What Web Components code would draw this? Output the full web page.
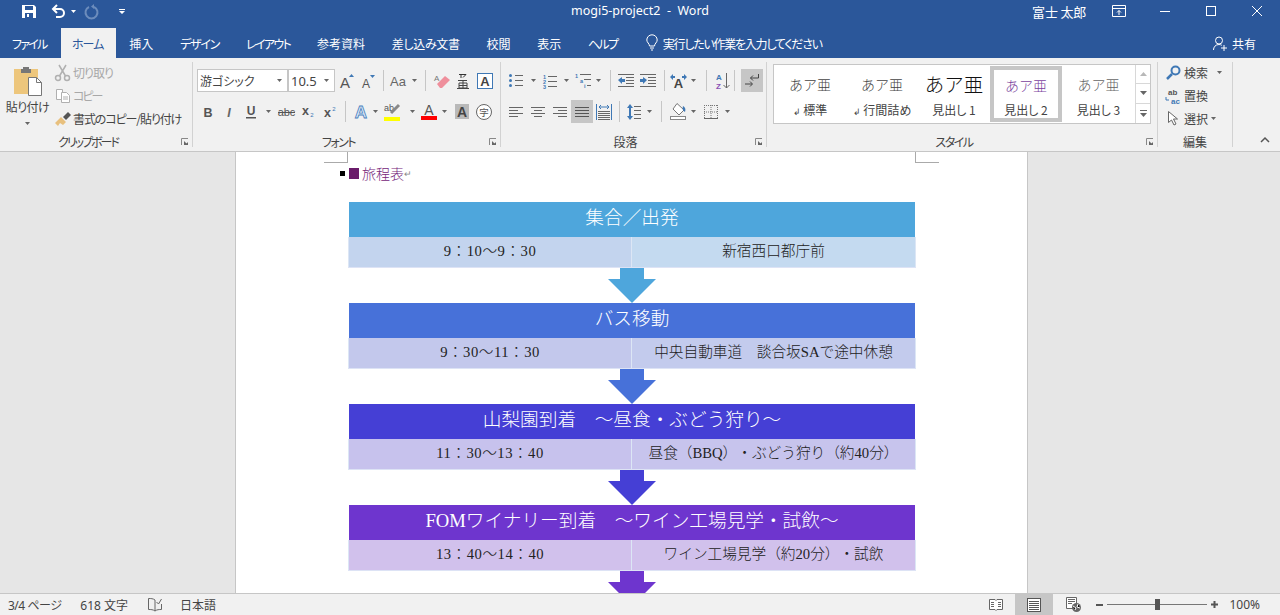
<!DOCTYPE html>
<html lang="ja">
<head>
<meta charset="utf-8">
<title>mogi5-project2 - Word</title>
<style>
    html, body { margin: 0; height: 100%; overflow: hidden; background: #e6e6e6; }
    body {
        display: flex;
        flex-direction: column;
        height: 615px;
        font-family: "Noto Sans CJK JP", "Noto Sans", sans-serif;
    }
</style>
</head>
<body>
<word-titlebar></word-titlebar>
<word-tabs></word-tabs>
<word-ribbon></word-ribbon>
<word-doc>
    <flow-step style="--h:#4ea6dc;--l:#c3d4ee;--r:#c4daf0" heading="集合／出発" left="9：10～9：30" right="新宿西口都庁前"></flow-step>
    <flow-arrow style="--h:#4ea6dc"></flow-arrow>
    <flow-step style="--h:#4771d9;--l:#c3c8ec;--r:#c3cbed" heading="バス移動" left="9：30～11：30" right="中央自動車道　談合坂SAで途中休憩"></flow-step>
    <flow-arrow style="--h:#4771d9"></flow-arrow>
    <flow-step style="--h:#453fd5;--l:#c7c2ed;--r:#c7c4ed" heading="山梨園到着　～昼食・ぶどう狩り～" left="11：30～13：40" right="昼食（BBQ）・ぶどう狩り（約40分）"></flow-step>
    <flow-arrow style="--h:#453fd5"></flow-arrow>
    <flow-step style="--h:#6e35ce;--l:#d1c1ec;--r:#d1c1ec" heading="FOMワイナリー到着　～ワイン工場見学・試飲～" left="13：40～14：40" right="ワイン工場見学（約20分）・試飲"></flow-step>
    <flow-arrow style="--h:#6e35ce"></flow-arrow>
</word-doc>
<word-status></word-status>

<script>
const G = "#666";
const B = "#3f78b5";
const SANS = 'font-family="Liberation Sans"';

const lines = (rows, col = G) => `<path fill="none" stroke="${col}" d="${rows.map(r => `M${r[0]} ${r[2] + .5}H${r[1]}`).join("")}"/>`;
const letter = (t, x, y, size, extra = "") => `<text x="${x}" y="${y}" ${SANS} font-size="${size}" text-anchor="middle" ${extra}>${t}</text>`;

const ICONS = {
    caret: [5, 3, `<path fill="#666" d="M0 0h5L2.5 3z"/>`],
    gup: [7, 4, `<path fill="#b8b8b8" d="M0 4h7L3.500 0z"/>`],
    gdown: [7, 4, `<path fill="#666" d="M0 0h7L3.500 4z"/>`],
    gmore: [7, 7, `<path fill="#666" d="M0 0h7v1H0zM0 3h7L3.500 7z"/>`],
    sep: [1, 21, `<rect width="1" height="21" fill="#c6c6c6"/>`],
    launcher: [8, 8, `<path fill="none" stroke="#888" d="M.5 7V.5H7"/><path fill="#666" d="M3 3l4 4H3z M7 4v3H4z"/>`],

    save: [14, 13, `<path fill="#fff" fill-rule="evenodd" d="M0 0h12l2 2v11H0zM3 1v4h8V1zM3 8v5h8V8z"/><rect x="5" y="9" width="2" height="3" fill="#fff"/>`],
    undo: [15, 14, `<path fill="none" stroke="#fff" stroke-width="2" d="M6 1 2 5l4 4"/><path fill="none" stroke="#fff" stroke-width="2" d="M2 5h7a4 4 0 0 1 0 8H5"/>`],
    redo: [14, 14, `<path fill="none" stroke="#6c8cbc" stroke-width="2" d="M5 3a6 6 0 1 0 5 0"/><path fill="#6c8cbc" d="M10 0v5l-3-2.500z"/>`],
    custom: [6, 5, `<path fill="#fff" d="M0 0h6v1H0zM0 2h6L3 5z"/>`],
    ribbonopt: [14, 12, `<path fill="none" stroke="#fff" d="M.5 .5h13v11H.5zM.5 3.500h13"/><path fill="none" stroke="#fff" d="M7 10V5.500M5 7.500l2-2 2 2"/>`],
    min: [10, 1, `<rect width="10" height="1" fill="#fff"/>`],
    max: [10, 10, `<rect x=".5" y=".5" width="9" height="9" fill="none" stroke="#fff"/>`],
    close: [10, 10, `<path stroke="#fff" d="M0 0l10 10M10 0 0 10"/>`],
    bulb: [12, 16, `<path fill="none" stroke="#fff" d="M3.500 11C3.500 8.500 .8 7.500 .8 5a5.200 5.200 0 0 1 10.400 0C11.200 7.500 8.500 8.500 8.500 11zM4 13h4M5 15h2"/>`],
    share: [15, 15, `<path fill="none" stroke="#fff" d="M6 1a3.500 3.500 0 0 1 0 7 3.500 3.500 0 0 1 0-7zM.5 14c0-3 2-5.500 5.500-5.500 1 0 2 .3 2.800 .8M11 9v6M8 12h6"/>`],

    paste: [29, 30, `<path fill="#edc67c" d="M0 3h24v25H0z"/><path fill="#777" d="M7 3h2V1h6v2h2v4H7z"/><path fill="#fff" stroke="#777" d="M14.500 11.500h8l5 5v13h-13z"/><path fill="none" stroke="#777" d="M22.500 11.500v5h5"/>`],
    cut: [15, 16, `<g fill="none" stroke="#b0b0b0" stroke-width="1.500"><circle cx="3" cy="13" r="2.500"/><circle cx="12" cy="13" r="2.500"/><path d="M4.500 11 11 0M10.500 11 4 0"/></g>`],
    copy: [14, 14, `<g fill="#fff" stroke="#b0b0b0"><path d="M.5 .5h6v10h-6z"/><path d="M5.500 3.500h5l3 3v7h-8z"/></g><path stroke="#b0b0b0" d="M7 8h5M7 10h5"/>`],
    brush: [16, 14, `<path fill="#e8c07e" d="M0 11l6-6 5 5-3 3-3-2-2 3z"/><path fill="#555" d="M8 5l5-5 3 3-5 5z"/>`],

    growfont: [16, 16, letter("A", 6, 15, 15, 'fill="#555"') + `<path fill="${B}" d="M10 4l2.500-3L15 4z"/>`],
    shrinkfont: [14, 14, letter("A", 5, 14, 12, 'fill="#555"') + `<path fill="${B}" d="M9 1h5l-2.500 3z"/>`],
    aa: [18, 14, `<text x="0" y="12" ${SANS} font-size="13" fill="#666">Aa</text>`],
    eraser: [16, 15, `<text x="0" y="8" ${SANS} font-size="8" fill="#777">A</text><path fill="#ef8f9c" d="M3 11l8-8 5 4-8 8H6z"/>`],
    ruby: [12, 16, `<path stroke="#333" fill="none" d="M2 1.500h7L6 4.500M4 2v3"/><path stroke="#444" fill="none" d="M1 7.500h9M2 10h8v5H2zM6 8v7M2 12.500h8M0 15.500h12"/>`],
    boxa: [16, 16, `<rect x=".5" y=".5" width="15" height="15" fill="#fff" stroke="${B}"/>` + letter("A", 8, 13, 13, 'fill="#444" font-weight="bold"')],
    bold: [10, 12, letter("B", 5, 11, 12.500, 'font-weight="bold" fill="#555"')],
    italic: [8, 12, letter("I", 4, 11, 12.500, 'font-style="italic" font-weight="bold" fill="#666"')],
    under: [10, 14, letter("U", 5, 10, 12, 'font-weight="bold" fill="#555"') + `<rect y="12" width="10" height="1.500" fill="#555"/>`],
    strike: [17, 12, letter("abc", 8.500, 10, 11, 'fill="#555"') + `<rect y="6" width="17" height="1" fill="#555"/>`],
    sub: [13, 13, letter("x", 4.500, 10, 12.500, 'font-weight="bold" fill="#555"') + letter("2", 11, 12, 6, `fill="${B}"`)],
    sup: [13, 13, letter("x", 4.500, 12, 12.500, 'font-weight="bold" fill="#555"') + letter("2", 11, 6, 6, `fill="${B}"`)],
    effect: [14, 15, `<text x="7" y="14" ${SANS} font-size="17" font-weight="bold" text-anchor="middle" fill="#dceaf8" stroke="#4a80bd" stroke-width=".8">A</text>`],
    hilite: [17, 19, `<text x="0" y="9" ${SANS} font-size="9" fill="#555">ab</text><path stroke="#888" stroke-width="3" d="M7 11l8-8"/><rect y="15" width="16" height="4" fill="#ff0"/>`],
    fontcolor: [16, 17, letter("A", 8, 12, 14, 'fill="#555"') + `<rect y="13" width="16" height="4" fill="#f00"/>`],
    shade: [14, 15, `<rect width="14" height="15" fill="#b9b9b9"/>` + letter("A", 7, 13, 14, 'fill="#444" font-weight="bold"')],
    ji: [16, 16, `<circle cx="8" cy="8" r="7.500" fill="#fff" stroke="#666"/><text x="8" y="11.500" font-family="Noto Sans CJK JP" font-size="9.500" text-anchor="middle" fill="#555">字</text>`],

    bullets: [14, 13, `<g fill="${B}"><circle cx="1.500" cy="1.500" r="1.500"/><circle cx="1.500" cy="6.500" r="1.500"/><circle cx="1.500" cy="11.500" r="1.500"/></g>` + lines([[6, 14, 1], [6, 14, 6], [6, 14, 11]])],
    numbers: [14, 14, `<g ${SANS} font-size="5.500" font-weight="bold" fill="${B}"><text x="0" y="5">1</text><text x="0" y="10">2</text><text x="0" y="15">3</text></g>` + lines([[5, 14, 2], [5, 14, 7], [5, 14, 12]])],
    multi: [16, 15, `<g ${SANS} font-size="5.500" font-weight="bold" fill="${B}"><text x="0" y="5">1</text><text x="5" y="10">a</text><text x="9" y="15">i</text></g>` + lines([[5, 16, 1], [9, 16, 6], [12, 16, 12]])],
    outdent: [16, 13, lines([[0, 16, 0], [8, 16, 3], [8, 16, 6], [8, 16, 9], [0, 16, 12]]) + `<path fill="${B}" d="M0 6l4-3v2h3v3H4v2z"/>`],
    indent: [16, 13, lines([[0, 16, 0], [8, 16, 3], [8, 16, 6], [8, 16, 9], [0, 16, 12]]) + `<path fill="${B}" d="M7 6 3 3v2H0v3h3v2z"/>`],
    direction: [17, 14, letter("A", 8.500, 14, 13, 'fill="#444" font-weight="bold"') + `<path fill="${B}" d="M0 3l3-3v2h2v2H3v2zM17 3l-3-3v2h-2v2h2v2z"/>`],
    sort: [13, 16, `<g ${SANS} font-size="8" font-weight="bold"><text x="0" y="7" fill="${B}">A</text><text x="0" y="16" fill="#8a4fb5">Z</text></g><path fill="none" stroke="#666" d="M10.500 0v15M7.500 12l3 3 3-3"/>`],
    pilcrow: [14, 14, `<path fill="none" stroke="#444" d="M13.500 0v4h-8M8 1.500 5.500 4 8 6.500M0 10h7M5 7.500 7.500 10 5 12.500"/>`],
    alignl: [14, 10, lines([[0, 14, 0], [0, 9, 3], [0, 14, 6], [0, 9, 9]])],
    alignc: [14, 10, lines([[0, 14, 0], [3, 11, 3], [0, 14, 6], [3, 11, 9]])],
    alignr: [14, 10, lines([[0, 14, 0], [5, 14, 3], [0, 14, 6], [5, 14, 9]])],
    alignj: [14, 10, lines([[0, 14, 0], [0, 14, 3], [0, 14, 6], [0, 14, 9]], "#555")],
    distrib: [16, 16, `<path stroke="${B}" fill="none" d="M.5 0v16M15.500 0v16M3 3h10M3 3l2-2M3 3l2 2M13 3l-2-2M13 3l-2 2"/>` + lines([[2, 14, 7], [2, 14, 9], [2, 14, 11], [2, 14, 13], [2, 14, 15]])],
    spacing: [14, 16, `<path fill="${B}" d="M3 0l3 4H4v8h2l-3 4-3-4h2V4H0z"/>` + lines([[7, 14, 2], [7, 14, 6], [7, 14, 10], [7, 14, 14]])],
    fill: [17, 17, `<path fill="#fff" stroke="#777" d="M7 .5 14 7l-5 5-6-6z"/><path fill="${B}" d="M13 3c2 1 3 3 2 6-2-1-3-3-2-6z"/><rect x=".5" y="13.500" width="15" height="3" fill="#fff" stroke="#888"/>`],
    borders: [14, 14, `<path fill="none" stroke="#777" stroke-dasharray="1 1" d="M.5 0v14M13.500 0v14M0 .5h14M7 0v14M0 7h14"/><path stroke="#666" d="M0 13.500h14"/>`],

    search: [15, 15, `<circle cx="9.500" cy="5.500" r="4" fill="none" stroke="${B}" stroke-width="2"/><path stroke="${B}" stroke-width="2.500" d="M6 9l-5 5"/>`],
    replace: [17, 16, `<text x="3" y="7" ${SANS} font-size="8" font-weight="bold" fill="#555">ab</text><text x="6" y="16" ${SANS} font-size="8" font-weight="bold" fill="${B}">ac</text><path fill="none" stroke="${B}" d="M1 9v3h3"/>`],
    select: [11, 15, `<path fill="#fff" stroke="#666" d="M.5 .5v11l3-2.500 2.500 5 2-1-2.500-5h4z"/>`],
    collapse: [10, 6, `<path fill="none" stroke="#555" stroke-width="1.500" d="M1 5l4-4 4 4"/>`],

    proof: [14, 13, `<path fill="none" stroke="#666" d="M7 2C5 .5 3 .5 .5 .5v11c2.500 0 4.500 0 6.500 1.500 2-1.500 4-1.500 6.500-1.500V6M7 2v11"/><path fill="none" stroke="#666" d="M8.500 4l2 2 3-5"/>`],
    read: [14, 14, `<path fill="#fff" stroke="#666" d="M.5 1.500h5.500l1 1 1-1h5.500v10H8l-1 1-1-1H.5z"/>` + lines([[2, 5, 4], [2, 5, 6], [2, 5, 8], [9, 12, 4], [9, 12, 6], [9, 12, 8]])],
    print: [14, 14, `<rect x=".5" y=".5" width="13" height="13" fill="#fff" stroke="#555"/>` + lines([[2, 12, 3], [2, 12, 5], [2, 12, 7], [2, 12, 9], [2, 12, 11]], "#555")],
    web: [15, 15, `<path fill="#fff" stroke="#666" d="M.5 .5h10v8H7v3H.5z"/>` + lines([[2, 9, 2], [2, 9, 4], [2, 6, 6]]) + `<circle cx="10.500" cy="10.500" r="4.500" fill="#666"/><path stroke="#fff" d="M7 9l3 2-1 2M12 7l-1 3 3 1"/>`],
    minus: [7, 2, `<rect width="7" height="2" fill="#555"/>`],
    plus: [7, 7, `<path fill="#555" d="M2.500 0h2v2.500H7v2H4.500V7h-2V4.500H0v-2h2.500z"/>`],
};

// icon cell: w = cell width, on = pressed state
class WIco extends HTMLElement {
    connectedCallback() {
        const [vw, vh, body] = ICONS[this.getAttribute("n")];
        const w = this.getAttribute("w");
        this.attachShadow({ mode: "open" }).innerHTML = `
            <style>
                :host { display: inline-flex; align-items: center; justify-content: center; flex: none; height: 100%; ${w ? `width:${w}px;` : ""} }
                :host([on]) { background: #c6c6c6; }
                svg { display: block; overflow: visible; }
            </style>
            <svg width="${vw}" height="${vh}" viewBox="0 0 ${vw} ${vh}">${body}</svg>`;
    }
}
customElements.define("w-ico", WIco);

class WordTitlebar extends HTMLElement {
    connectedCallback() {
        this.attachShadow({ mode: "open" }).innerHTML = `
            <style>
                :host { display: grid; grid-template-columns: 1fr auto 1fr; height: 28px; flex: none; background: #2b579a; color: #fff; font-size: 12px; }
                .qat, .right { display: flex; align-items: center; height: 22px; }
                .qat { padding-left: 18px; }
                .right { justify-content: flex-end; }
                .doc { line-height: 21px; font-size: 12.500px; font-family: "Noto Sans", sans-serif; white-space: pre; }
                .name { margin-right: 9px; font-size: 13px; letter-spacing: -.2px; }
            </style>
            <div class="qat">
                <w-ico n="save" w="22"></w-ico>
                <w-ico n="undo" w="22" style="margin-left:7px"></w-ico>
                <w-ico n="caret" w="8" style="filter:brightness(3)"></w-ico>
                <w-ico n="redo" w="20" style="margin-left:4px"></w-ico>
                <w-ico n="custom" w="8" style="margin-left:17px"></w-ico>
            </div>
            <div class="doc">mogi5-project2  -  Word</div>
            <div class="right">
                <span class="name">富士 太郎</span>
                <w-ico n="ribbonopt" w="47"></w-ico>
                <w-ico n="min" w="46"></w-ico>
                <w-ico n="max" w="46"></w-ico>
                <w-ico n="close" w="46"></w-ico>
            </div>`;
    }
}
customElements.define("word-titlebar", WordTitlebar);

class WordTabs extends HTMLElement {
    connectedCallback() {
        // kana in the reference font runs narrower, so each name carries its own tracking
        const tabs = [["挿入", 0], ["デザイン", -1.2], ["レイアウト", -1.6], ["参考資料", 0], ["差し込み文書", -.3], ["校閲", 0], ["表示", 0], ["ヘルプ", -1.6]];
        this.attachShadow({ mode: "open" }).innerHTML = `
            <style>
                :host { display: flex; align-items: stretch; height: 30px; flex: none; background: #2b579a; color: #fff; font-size: 12px; font-feature-settings: "palt"; }
                .tab { display: flex; align-items: center; padding: 0 13.350px; white-space: nowrap; }
                .file { padding: 0 12px; width: 37px; margin-right: 0; letter-spacing: -1.750px; }
                .home { background: #f1f1f1; color: #2b579a; padding: 0 11px; width: 33px; letter-spacing: -1px; }
                .tell { display: flex; align-items: center; gap: 5px; margin-left: 15px; white-space: nowrap; letter-spacing: -1.250px; }
                .share { display: flex; align-items: center; gap: 4px; margin-left: auto; margin-right: 24px; white-space: nowrap; }
            </style>
            <div class="tab file">ファイル</div>
            <div class="tab home">ホーム</div>
            ${tabs.map(t => `<div class="tab" style="letter-spacing:${t[1]}px">${t[0]}</div>`).join("")}
            <div class="tell"><w-ico n="bulb"></w-ico><span>実行したい作業を入力してください</span></div>
            <div class="share"><w-ico n="share"></w-ico><span>共有</span></div>`;
    }
}
customElements.define("word-tabs", WordTabs);

class RbGroup extends HTMLElement {
    connectedCallback() {
        const launcher = this.hasAttribute("launcher");
        this.attachShadow({ mode: "open" }).innerHTML = `
            <style>
                :host { display: flex; flex-direction: column; flex: none; box-sizing: border-box; border-right: 1px solid #d2d2d2; }
                .body { flex: 1; min-height: 0; }
                .foot { display: flex; height: 10px; line-height: 10px; font-size: 12px; color: #444; font-feature-settings: "palt"; }
                .label { flex: 1; text-align: center; white-space: nowrap; letter-spacing: var(--ls, 0); }
                .launch { width: 16px; display: flex; justify-content: flex-end; align-items: center; padding-right: 3px; box-sizing: border-box; }
            </style>
            <div class="body"><slot></slot></div>
            <div class="foot">
                <span class="label">${this.getAttribute("label")}</span>
                ${launcher ? '<span class="launch"><w-ico n="launcher"></w-ico></span>' : ""}
            </div>`;
    }
}
customElements.define("rb-group", RbGroup);

class StyleItem extends HTMLElement {
    connectedCallback() {
        const ret = this.hasAttribute("ret") ? '<span class="ret">↲</span> ' : "";
        this.attachShadow({ mode: "open" }).innerHTML = `
            <style>
                :host { display: flex; flex-direction: column; align-items: center; box-sizing: border-box; height: 100%; font-weight: 300; }
                :host([selected]) { border: 4px solid #c6c6c6; margin: 1px 0; height: 56px; }
                .s { height: 36px; line-height: 38px; font-size: var(--size, 14px); color: var(--col, #444); white-space: nowrap; }
                :host([selected]) .s { height: 31px; line-height: 31px; }
                .l { font-size: 12px; color: #444; line-height: 18px; font-weight: 400; white-space: nowrap; font-feature-settings: "palt"; }
                .ret { font-size: 9px; }
            </style>
            <div class="s">あア亜</div>
            <div class="l">${ret}${this.getAttribute("label")}</div>`;
    }
}
customElements.define("style-item", StyleItem);

class WordRibbon extends HTMLElement {
    connectedCallback() {
        this.attachShadow({ mode: "open" }).innerHTML = `
            <style>
                :host { display: flex; box-sizing: border-box; height: 94px; flex: none; padding: 4px 0; background: #f1f1f1; border-bottom: 1px solid #c6c6c6; color: #444; font-size: 12px; }
                .row { display: flex; align-items: center; height: 23px; }
                .rows { display: flex; flex-direction: column; gap: 8px; padding: 7px 0 0 4px; }
                .clip { display: flex; }
                .paste { width: 55px; display: flex; flex-direction: column; align-items: center; }
                .paste .pic { height: 29px; margin: 4px 0 0 2px; }
                .paste .txt { margin-top: 3px; line-height: 18px; white-space: nowrap; font-feature-settings: "palt"; letter-spacing: -.5px; }
                .paste .drop { height: 8px; margin-top: 3px; }
                .small { margin-top: -1px; }
                .small .row { gap: 3px; white-space: nowrap; font-feature-settings: "palt"; }
                .small .row.off { color: #a8a8a8; }
                .small w-ico { width: 15px; }
                .combo { box-sizing: border-box; height: 23px; display: flex; align-items: center; justify-content: space-between; background: #fff; border: 1px solid #c6c6c6; padding: 0 5px 0 2px; font-size: 12px; color: #444; white-space: nowrap; }
                .gallery { display: grid; grid-template-columns: 72px 72px 72px 72px 73px 15px; box-sizing: border-box; width: 378px; height: 60px; margin: 2px 0 0 6px; background: #fff; border: 1px solid #c6c6c6; }
                .scroll { display: grid; grid-template-rows: repeat(3, 1fr); border-left: 1px solid #d8d8d8; }
                .scroll w-ico { border-bottom: 1px solid #d8d8d8; width: 100%; box-sizing: border-box; }
                .scroll w-ico:last-child { border-bottom: 0; }
                .edit { padding-left: 7px; margin-top: -1px; }
                .edit .row { gap: 2px; font-feature-settings: "palt"; white-space: nowrap; }
                .rest { flex: 1; display: flex; justify-content: flex-end; align-items: flex-end; padding-right: 10px; }
                .rest w-ico { height: 14px; }
            </style>

            <rb-group label="クリップボード" launcher style="width:193px;--ls:-2px">
                <div class="clip">
                    <div class="paste">
                        <w-ico class="pic" n="paste"></w-ico>
                        <span class="txt">貼り付け</span>
                        <w-ico class="drop" n="caret"></w-ico>
                    </div>
                    <div class="small">
                        <div class="row off"><w-ico n="cut"></w-ico><span style="letter-spacing:-1px">切り取り</span></div>
                        <div class="row off"><w-ico n="copy"></w-ico><span style="letter-spacing:-2px">コピー</span></div>
                        <div class="row"><w-ico n="brush"></w-ico><span style="letter-spacing:-1.100px">書式のコピー/貼り付け</span></div>
                    </div>
                </div>
            </rb-group>

            <rb-group label="フォント" launcher style="width:308px;--ls:-1.500px">
                <div class="rows">
                    <div class="row">
                        <div class="combo" style="width:91px"><span style="font-feature-settings:'palt'">游ゴシック</span><w-ico n="caret"></w-ico></div>
                        <div class="combo" style="width:47px"><span style="font-family:'Noto Sans';font-size:13px">10.5</span><w-ico n="caret"></w-ico></div>
                        <w-ico n="growfont" w="24"></w-ico>
                        <w-ico n="shrinkfont" w="18"></w-ico>
                        <w-ico n="sep" w="12"></w-ico>
                        <w-ico n="aa" w="20"></w-ico>
                        <w-ico n="caret" w="10"></w-ico>
                        <w-ico n="sep" w="12"></w-ico>
                        <w-ico n="eraser" w="22"></w-ico>
                        <w-ico n="ruby" w="20"></w-ico>
                        <w-ico n="boxa" w="24"></w-ico>
                    </div>
                    <div class="row">
                        <w-ico n="bold" w="21"></w-ico>
                        <w-ico n="italic" w="22"></w-ico>
                        <w-ico n="under" w="22"></w-ico>
                        <w-ico n="caret" w="12"></w-ico>
                        <w-ico n="strike" w="24"></w-ico>
                        <w-ico n="sub" w="19"></w-ico>
                        <w-ico n="sup" w="24"></w-ico>
                        <w-ico n="sep" w="8"></w-ico>
                        <w-ico n="effect" w="23"></w-ico>
                        <w-ico n="caret" w="7"></w-ico>
                        <w-ico n="hilite" w="27"></w-ico>
                        <w-ico n="caret" w="12"></w-ico>
                        <w-ico n="fontcolor" w="22"></w-ico>
                        <w-ico n="caret" w="9"></w-ico>
                        <w-ico n="shade" w="26"></w-ico>
                        <w-ico n="ji" w="18"></w-ico>
                    </div>
                </div>
            </rb-group>

            <rb-group label="段落" launcher style="width:266px">
                <div class="rows">
                    <div class="row">
                        <w-ico n="bullets" w="22"></w-ico>
                        <w-ico n="caret" w="12"></w-ico>
                        <w-ico n="numbers" w="22"></w-ico>
                        <w-ico n="caret" w="10"></w-ico>
                        <w-ico n="multi" w="23"></w-ico>
                        <w-ico n="caret" w="8"></w-ico>
                        <w-ico n="sep" w="16"></w-ico>
                        <w-ico n="outdent" w="16"></w-ico>
                        <w-ico n="indent" w="28"></w-ico>
                        <w-ico n="sep" w="4"></w-ico>
                        <w-ico n="direction" w="24"></w-ico>
                        <w-ico n="caret" w="6"></w-ico>
                        <w-ico n="sep" w="20"></w-ico>
                        <w-ico n="sort" w="12"></w-ico>
                        <w-ico n="sep" w="13"></w-ico>
                        <w-ico n="pilcrow" w="22" on></w-ico>
                    </div>
                    <div class="row">
                        <w-ico n="alignl" w="22"></w-ico>
                        <w-ico n="alignc" w="22"></w-ico>
                        <w-ico n="alignr" w="22"></w-ico>
                        <w-ico n="alignj" w="22" on></w-ico>
                        <w-ico n="distrib" w="22"></w-ico>
                        <w-ico n="sep" w="8"></w-ico>
                        <w-ico n="spacing" w="22"></w-ico>
                        <w-ico n="caret" w="8"></w-ico>
                        <w-ico n="sep" w="16"></w-ico>
                        <w-ico n="fill" w="18"></w-ico>
                        <w-ico n="caret" w="12"></w-ico>
                        <w-ico n="borders" w="24"></w-ico>
                        <w-ico n="caret" w="8"></w-ico>
                    </div>
                </div>
            </rb-group>

            <rb-group label="スタイル" launcher style="width:391px;--ls:-1.500px">
                <div class="gallery">
                    <style-item label="標準" ret></style-item>
                    <style-item label="行間詰め" ret></style-item>
                    <style-item label="見出し 1" style="--size:19.500px;--col:#111"></style-item>
                    <style-item label="見出し 2" selected style="--col:#7b3f9d"></style-item>
                    <style-item label="見出し 3" style="--col:#666"></style-item>
                    <div class="scroll">
                        <w-ico n="gup"></w-ico>
                        <w-ico n="gdown"></w-ico>
                        <w-ico n="gmore"></w-ico>
                    </div>
                </div>
            </rb-group>

            <rb-group label="編集" style="width:75px">
                <div class="edit">
                    <div class="row"><w-ico n="search" w="17"></w-ico>検索<w-ico n="caret" w="18"></w-ico></div>
                    <div class="row"><w-ico n="replace" w="17"></w-ico>置換</div>
                    <div class="row"><w-ico n="select" w="17"></w-ico>選択<w-ico n="caret" w="6"></w-ico></div>
                </div>
            </rb-group>

            <div class="rest"><w-ico n="collapse"></w-ico></div>`;
    }
}
customElements.define("word-ribbon", WordRibbon);

class WordDoc extends HTMLElement {
    connectedCallback() {
        this.attachShadow({ mode: "open" }).innerHTML = `
            <style>
                :host { display: block; flex: 1; min-height: 0; overflow: hidden; background: #e6e6e6; }
                .page { box-sizing: border-box; width: 793px; height: 100%; margin-left: 235px; background: #fff; border: solid #c6c6c6; border-width: 0 1px; }
                .marks { display: flex; justify-content: space-between; width: 615px; margin-left: 88px; height: 11px; }
                .marks i { box-sizing: border-box; width: 24px; height: 11px; border-bottom: 1px solid #aaa; }
                .marks i:first-child { border-right: 1px solid #aaa; }
                .marks i:last-child { border-left: 1px solid #aaa; }
                .title { display: flex; align-items: center; height: 20px; margin-left: 104px; font-size: 14px; color: #76267a; font-weight: 300; }
                .title .dot { width: 5px; height: 5px; background: #000; margin-right: 4px; }
                .title .sq { width: 10px; height: 11px; background: #6a1b6a; margin-right: 3px; }
                .title .ret { font-size: 9px; color: #888; }
                .flow { width: 566px; margin: 19px 0 0 113px; }
            </style>
            <div class="page">
                <div class="marks"><i></i><i></i></div>
                <div class="title"><span class="dot"></span><span class="sq"></span>旅程表<span class="ret">↵</span></div>
                <div class="flow"><slot></slot></div>
            </div>`;
    }
}
customElements.define("word-doc", WordDoc);

class FlowStep extends HTMLElement {
    connectedCallback() {
        this.attachShadow({ mode: "open" }).innerHTML = `
            <style>
                :host { display: block; font-family: "Liberation Serif", "Noto Sans CJK JP", serif; font-weight: 300; text-spacing-trim: space-all; }
                .head { height: 35px; line-height: 31px; text-align: center; color: #fff; background: var(--h); font-size: 18.670px; white-space: nowrap; }
                .cols { display: grid; grid-template-columns: 282px 1fr; gap: 1px; height: 31px; box-sizing: border-box; margin: 0 -1px; padding: 0 1px; background: #dce6f5; border-bottom: 1px solid #dde3f5; color: #222; font-size: 14.670px; }
                .cols div { display: flex; align-items: center; justify-content: center; white-space: nowrap; padding-bottom: 5px; box-sizing: border-box; }
                .l { background: var(--l); letter-spacing: .5px; }
                .r { background: var(--r); }
            </style>
            <div class="head">${this.getAttribute("heading")}</div>
            <div class="cols">
                <div class="l">${this.getAttribute("left")}</div>
                <div class="r">${this.getAttribute("right")}</div>
            </div>`;
    }
}
customElements.define("flow-step", FlowStep);

class FlowArrow extends HTMLElement {
    connectedCallback() {
        this.attachShadow({ mode: "open" }).innerHTML = `
            <style>
                :host { display: flex; justify-content: center; height: 35px; padding-right: 1px; margin-left: 1px; }
                svg { display: block; }
            </style>
            <svg width="48" height="35" viewBox="0 0 48 35"><path fill="var(--h)" d="M12 0h24v11h12L24 35 0 11h12z"/></svg>`;
    }
}
customElements.define("flow-arrow", FlowArrow);

class WordStatus extends HTMLElement {
    connectedCallback() {
        this.attachShadow({ mode: "open" }).innerHTML = `
            <style>
                :host { display: flex; align-items: stretch; box-sizing: border-box; height: 22px; flex: none; background: #f1f1f1; border-top: 1px solid #c6c6c6; color: #444; font-size: 12px; font-feature-settings: "palt"; white-space: nowrap; }
                .left, .right { display: flex; align-items: center; }
                .left { padding-left: 8px; }
                .right { margin-left: auto; padding-right: 20px; }
                .num { font-family: "Noto Sans", "Noto Sans CJK JP", sans-serif; }
                .track { display: flex; align-items: center; justify-content: center; width: 100px; height: 100%; margin: 0 4px; background: linear-gradient(#777, #777) center / 100% 1px no-repeat; }
                .thumb { width: 5px; height: 11px; background: #555; }
            </style>
            <div class="left">
                <span class="num" style="letter-spacing:-.5px">3/4 ページ</span>
                <span class="num" style="margin-left:19px">618 文字</span>
                <w-ico n="proof" style="margin-left:20px"></w-ico>
                <span style="margin-left:18px">日本語</span>
            </div>
            <div class="right">
                <w-ico n="read" w="20"></w-ico>
                <w-ico n="print" w="38" on style="margin-left:9px"></w-ico>
                <w-ico n="web" w="20" style="margin-left:10px"></w-ico>
                <w-ico n="minus" style="margin-left:13px"></w-ico>
                <div class="track"><span class="thumb"></span></div>
                <w-ico n="plus"></w-ico>
                <span class="num" style="margin-left:11px">100%</span>
            </div>`;
    }
}
customElements.define("word-status", WordStatus);
</script>
</body>
</html>
